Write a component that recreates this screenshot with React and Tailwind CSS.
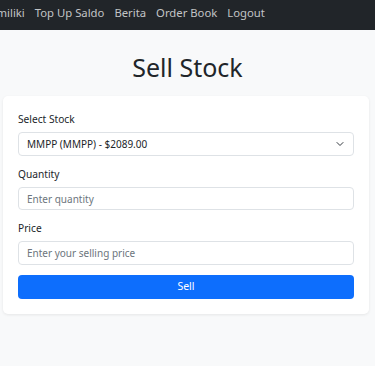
import React, { useState } from 'react'

const stocks = [
  { code: 'MMPP', name: 'MMPP', price: 2089 },
]

const navItems = ['Top Up Saldo', 'Berita', 'Order Book', 'Logout']

export default function App() {
  const [stock, setStock] = useState('MMPP')
  const [qty, setQty] = useState('')
  const [price, setPrice] = useState('')

  return (
    <div className="min-h-[366px] bg-[#f8f9fa] font-['Noto_Sans',sans-serif] text-[#212529]">
      <nav className="h-[30px] bg-[#212529] overflow-hidden">
        <ul className="flex h-full items-center pb-[3px] whitespace-nowrap text-[11.3px] text-[#c2c4c6] -ml-[59px]">
          <li className="px-[5px]">Saham Dimiliki</li>
          {navItems.map((item) => (
            <li key={item} className="px-[5px]">{item}</li>
          ))}
        </ul>
      </nav>

      <h2 className="mt-[25px] text-center text-[25px] font-normal leading-none">Sell Stock</h2>

      <form
        onSubmit={(e) => e.preventDefault()}
        className="ml-[3px] mr-[6px] mt-[16px] rounded-[5px] bg-white p-[15px] shadow-[0_1px_3px_rgba(0,0,0,0.08)] text-[10.2px]"
      >
        <div className="mb-[10px]">
          <label className="mb-[5px] block leading-[16px]">Select Stock</label>
          <div className="relative">
            <select
              value={stock}
              onChange={(e) => setStock(e.target.value)}
              className="h-[24px] w-full appearance-none rounded-[4px] border border-[#dee2e6] bg-white pl-[8px] pr-[30px] text-[10px] text-[#212529] outline-none"
            >
              {stocks.map((s) => (
                <option key={s.code} value={s.code}>
                  {s.name} ({s.code}) - ${s.price.toFixed(2)}
                </option>
              ))}
            </select>
            <svg className="pointer-events-none absolute right-[9px] top-1/2 h-[8px] w-[10px] -translate-y-1/2" viewBox="0 0 16 16" fill="none">
              <path d="m2 5 6 6 6-6" stroke="#343a40" strokeWidth="2" strokeLinecap="round" strokeLinejoin="round" />
            </svg>
          </div>
        </div>

        <div className="mb-[10px]">
          <label className="mb-[5px] block leading-[16px]">Quantity</label>
          <input
            type="number"
            value={qty}
            onChange={(e) => setQty(e.target.value)}
            placeholder="Enter quantity"
            className="h-[23px] w-full rounded-[4px] border border-[#dee2e6] px-[8px] text-[10px] outline-none placeholder:text-[#6c757d]"
          />
        </div>

        <div className="mb-[10px]">
          <label className="mb-[5px] block leading-[16px]">Price</label>
          <input
            type="number"
            value={price}
            onChange={(e) => setPrice(e.target.value)}
            placeholder="Enter your selling price"
            className="h-[24px] w-full rounded-[4px] border border-[#dee2e6] px-[8px] text-[10px] outline-none placeholder:text-[#6c757d]"
          />
        </div>

        <button type="submit" className="h-[24px] w-full rounded-[4px] bg-[#0d6efd] text-[10.5px] text-white">
          Sell
        </button>
      </form>
    </div>
  )
}
